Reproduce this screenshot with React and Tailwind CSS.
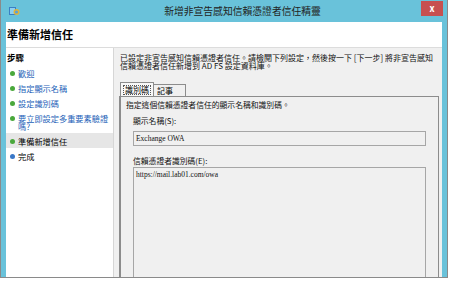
const FONT = { fontFamily: '"Noto Sans CJK TC", "Noto Sans", sans-serif' };

const steps = [
  { label: '歡迎', done: true },
  { label: '指定顯示名稱', done: true },
  { label: '設定識別碼', done: true },
  { label: '要立即設定多重要素驗證嗎?', done: true },
  { label: '準備新增信任', done: true, current: true },
  { label: '完成', done: false },
];

const AppIcon = () => (
  <svg width="12" height="12" viewBox="0 0 12 12">
    <rect x="1" y="2" width="7" height="8" fill="#3a7fc4" />
    <rect x="2" y="3" width="5" height="6" fill="#8fd0f0" />
    <circle cx="8.5" cy="7" r="3" fill="#e2b33a" />
    <circle cx="8.5" cy="7" r="1.6" fill="#5aa0d8" />
  </svg>
);

export default function App() {
  return (
    <div className="w-[450px] h-[281px] bg-white overflow-hidden" style={FONT}>
      <div className="w-[448px] h-[278px] border-x border-b border-[#8a8a8a] bg-[#69c2da] flex flex-col">
        {/* Title bar */}
        <div className="h-[22px] flex items-center shrink-0 relative">
          <div className="ml-[7px]"><AppIcon /></div>
          <div className="flex-1 text-center text-[9.8px] text-[#222] pl-[44px]">新增非宣告感知信賴憑證者信任精靈</div>
          <div className="w-[22px] h-[15px] mr-[4px] mb-[5px] bg-[#c75050] flex items-center justify-center text-white text-[9px] font-bold">x</div>
        </div>

        {/* Client area */}
        <div className="flex-1 mx-[5px] bg-white flex flex-col overflow-hidden">
          <div className="h-[26px] shrink-0 flex items-center pl-[1px] border-b border-[#dcdcdc]">
            <span className="text-[11px] font-bold text-black">準備新增信任</span>
          </div>

          <div className="flex flex-1 overflow-hidden">
            {/* Steps */}
            <div className="w-[108px] shrink-0 bg-white border-r border-[#d6d6d6] pt-[2px]">
              <div className="text-[8.5px] font-bold text-black pl-[1px] h-[14px] leading-[14px] mb-[1px]">步驟</div>
              {steps.map((s) => (
                <div
                  key={s.label}
                  className={`flex items-start pl-[4px] py-[3.5px] ${s.current ? 'bg-[#e6e6e6]' : ''}`}
                >
                  <span className={`mt-[2px] w-[5px] h-[5px] rounded-full shrink-0 ${s.done ? 'bg-[#4aa83c]' : 'bg-[#3a78c8]'}`} />
                  <span
                    className={`ml-[3px] text-[8.2px] leading-[8px] ${s.done && !s.current ? 'text-[#1c5fb8]' : 'text-black'}`}
                  >
                    {s.label}
                  </span>
                </div>
              ))}
            </div>

            {/* Right pane */}
            <div className="flex-1 bg-[#f0f0f0] pl-[5px] pr-[3px] pt-[6px] flex flex-col overflow-hidden">
              <p className="pl-[1px] text-[8px] leading-[7.5px] text-[#111]">
                已設定非宣告感知信賴憑證者信任。請檢閱下列設定，然後按一下 [下一步] 將非宣告感知信賴憑證者信任新增到 AD FS 設定資料庫。
              </p>

              <div className="mt-[13px] flex items-end h-[14px] shrink-0 pl-[1px]">
                <div className="h-[14px] px-[2px] border border-b-0 border-[#8c8c8c] bg-[#f8f8f8] flex items-center">
                  <span className="text-[8px] leading-[8px] border border-dotted border-[#555] px-[1px]">識別碼</span>
                </div>
                <div className="h-[12px] w-[32px] px-[3px] border border-b-0 border-l-0 border-[#8c8c8c] bg-[#f0f0f0] flex items-center">
                  <span className="text-[8px] leading-[8px]">記事</span>
                </div>
              </div>

              <div className="flex-1 border-l-2 border-t border-r border-[#8c8c8c] bg-[#f0f0f0] pl-[5px] pr-[12px] pt-[3px] flex flex-col">
                <div className="text-[7.8px] leading-[10px] text-[#111]">指定這個信賴憑證者信任的顯示名稱和識別碼。</div>
                <div className="pl-[7px] flex flex-col flex-1">
                  <div className="mt-[6px] text-[7.8px] leading-[10px] text-[#111]">顯示名稱(S):</div>
                  <div className="mt-[5px] h-[15px] border border-[#a6a6a6] bg-[#f0f0f0] flex items-center px-[2px] text-[7.5px] text-[#111]" style={{ fontFamily: '"Liberation Serif", serif' }}>
                    Exchange OWA
                  </div>
                  <div className="mt-[10px] text-[7.8px] leading-[10px] text-[#111]">信賴憑證者識別碼(E):</div>
                  <div className="mt-[1px] flex-1 border border-b-0 border-[#a6a6a6] bg-[#f0f0f0] px-[2px] pt-[2px] text-[7.5px] leading-[9px] text-[#111]" style={{ fontFamily: '"Liberation Serif", serif' }}>
                    https://mail.lab01.com/owa
                  </div>
                </div>
              </div>
            </div>
          </div>
        </div>
      </div>
    </div>
  );
}
